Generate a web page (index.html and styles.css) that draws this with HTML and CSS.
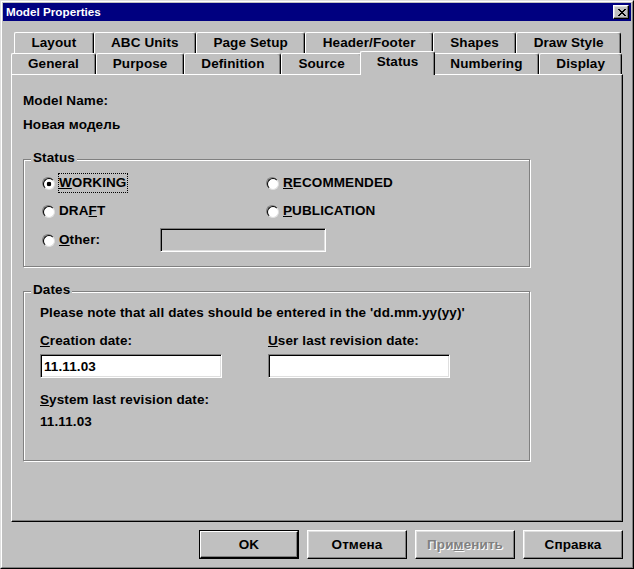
FILE: index.html
```html
<!DOCTYPE html>
<html lang="en">
<head>
<meta charset="utf-8">
<title>Model Properties</title>
<link rel="stylesheet" href="styles.css">
</head>
<body>
<div class="window">
  <div class="frame">
    <div class="titlebar">
      <span class="title">Model Properties</span>
      <span class="close-btn">
        <svg width="8" height="7" viewBox="0 0 8 7" shape-rendering="crispEdges"><path fill="#000" d="M0 0h2v1h-2z M6 0h2v1h-2z M1 1h2v1h-2z M5 1h2v1h-2z M2 2h4v1h-4z M3 3h2v1h-2z M2 4h4v1h-4z M1 5h2v1h-2z M5 5h2v1h-2z M0 6h2v1h-2z M6 6h2v1h-2z"/></svg>
      </span>
    </div>
    <div class="dialog">
      <div class="tabs tabs-back">
        <div class="tab">Layout</div>
        <div class="tab">ABC Units</div>
        <div class="tab">Page Setup</div>
        <div class="tab">Header/Footer</div>
        <div class="tab">Shapes</div>
        <div class="tab">Draw Style</div>
      </div>
      <div class="tabs tabs-front">
        <div class="tab">General</div>
        <div class="tab">Purpose</div>
        <div class="tab">Definition</div>
        <div class="tab">Source</div>
        <div class="tab tab-active">Status</div>
        <div class="tab">Numbering</div>
        <div class="tab">Display</div>
      </div>
      <div class="panel">
        <div class="line">Model Name:</div>
        <div class="line line-gap">Новая модель</div>

        <div class="group group-status">
          <div class="group-title">Status</div>
          <div class="radio-grid">
            <div class="radio-item"><span class="radio checked"></span><span class="radio-text focus"><u>W</u>ORKING</span></div>
            <div class="radio-item"><span class="radio"></span><span class="radio-text"><u>R</u>ECOMMENDED</span></div>
            <div class="radio-item"><span class="radio"></span><span class="radio-text">DRA<u>F</u>T</span></div>
            <div class="radio-item"><span class="radio"></span><span class="radio-text"><u>P</u>UBLICATION</span></div>
          </div>
          <div class="other-row">
            <div class="radio-item other-item"><span class="radio"></span><span class="radio-text"><u>O</u>ther:</span></div>
            <input class="textbox textbox-disabled other-box" type="text" value="" disabled>
          </div>
        </div>

        <div class="group group-dates">
          <div class="group-title">Dates</div>
          <div class="dates-body">
            <div class="line note">Please note that all dates should be entered in the 'dd.mm.yy(yy)'</div>
            <div class="date-grid">
              <div class="date-field">
                <div class="line"><u>C</u>reation date:</div>
                <input class="textbox date-box" type="text" value="11.11.03">
              </div>
              <div class="date-field">
                <div class="line"><u>U</u>ser last revision date:</div>
                <input class="textbox date-box" type="text" value="">
              </div>
            </div>
            <div class="line system-label"><u>S</u>ystem last revision date:</div>
            <div class="line system-value">11.11.03</div>
          </div>
        </div>
      </div>
      <div class="buttons">
        <div class="btn btn-default"><span class="btn-inner">OK</span></div>
        <div class="btn"><span class="btn-inner">Отмена</span></div>
        <div class="btn btn-disabled"><span class="btn-inner">При<u>м</u>енить</span></div>
        <div class="btn"><span class="btn-inner">Справка</span></div>
      </div>
    </div>
  </div>
</div>
</body>
</html>
```
FILE: styles.css
```css
* { box-sizing: border-box; }

html, body {
  margin: 0;
  padding: 0;
  background: #c0c0c0;
}

body {
  font-family: "Liberation Sans", Arial, sans-serif;
  font-weight: bold;
  font-size: 13.5px;
  letter-spacing: 0.1px;
  color: #000;
}

.window {
  width: 634px;
  height: 569px;
  border: 1px solid;
  border-color: #dfdfdf #000 #000 #dfdfdf;
  background: #c0c0c0;
}

.frame {
  height: 100%;
  border: 1px solid;
  border-color: #fff #808080 #808080 #fff;
  padding: 1px;
  display: flex;
  flex-direction: column;
}

.titlebar {
  height: 18px;
  background: #000080;
  display: flex;
  align-items: center;
  justify-content: space-between;
  padding: 0 2px 0 3px;
}

.title {
  color: #fff;
  font-size: 11.7px;
  letter-spacing: 0;
  line-height: 18px;
}

.close-btn {
  width: 16px;
  height: 14px;
  background: #c0c0c0;
  border: 1px solid;
  border-color: #fff #000 #000 #fff;
  box-shadow: inset -1px -1px 0 #808080, inset 1px 1px 0 #dfdfdf;
  display: flex;
  align-items: center;
  justify-content: center;
  padding-left: 1px;
}

.close-btn svg { display: block; }

.dialog {
  flex: 1;
  padding: 11px 8px 0 8px;
  display: flex;
  flex-direction: column;
}

.tabs {
  display: flex;
  height: 21px;
}

.tabs-back { margin: 0 2px 0 3px; }
.tabs-front { margin: 0 1px 0 0; }

.tab {
  flex: 1 1 auto;
  height: 21px;
  border-top: 1px solid #fff;
  border-left: 1px solid #fff;
  border-right: 1px solid #000;
  border-radius: 2px 3px 0 0;
  box-shadow: inset -1px 0 0 #808080;
  line-height: 19px;
  text-align: center;
  white-space: nowrap;
  background: #c0c0c0;
}

.tab-active {
  position: relative;
  z-index: 1;
  height: 24px;
  margin: -2px -2px -1px -2px;
  line-height: 19px;
}

.panel {
  height: 448px;
  border: 1px solid;
  border-color: #fff #000 #000 #fff;
  box-shadow: inset -1px -1px 0 #808080;
  padding: 18px 0 0 11px;
}

.line {
  height: 16px;
  line-height: 16px;
  white-space: nowrap;
}

.line-gap { margin-top: 8px; }

.group {
  width: 507px;
  border: 1px solid #808080;
  box-shadow: 1px 1px 0 #fff, inset 1px 1px 0 #fff;
}

.group-title {
  display: block;
  width: max-content;
  height: 16px;
  line-height: 16px;
  margin: -10px 0 0 7px;
  padding: 0 2px;
  background: #c0c0c0;
}

.group-status {
  margin-top: 26px;
  height: 108px;
}

.radio-grid {
  display: grid;
  grid-template-columns: 224px auto;
  row-gap: 8px;
  margin-top: 7px;
  padding-left: 18px;
}

.radio-item {
  display: flex;
  align-items: center;
  gap: 4px;
  height: 20px;
}

.radio {
  width: 12px;
  height: 12px;
  flex: none;
  border: 1px solid;
  border-color: #808080 #fff #fff #808080;
  border-radius: 50%;
}

.radio::before {
  content: "";
  display: block;
  width: 10px;
  height: 10px;
  border: 1px solid;
  border-color: #000 #dfdfdf #dfdfdf #000;
  border-radius: 50%;
  background: #fff;
}

.radio.checked::before {
  background: radial-gradient(circle, #000 0 2px, #fff 2.6px);
}

.radio-text {
  border: 1px dotted transparent;
  padding: 0 1px 0 0;
  line-height: 18px;
  height: 20px;
}

.radio-text.focus { border-color: #000; }

.other-row {
  display: flex;
  align-items: center;
  margin-top: 7px;
  height: 24px;
  padding-left: 18px;
}

.other-item { width: 118px; }

.textbox {
  display: block;
  height: 24px;
  margin: 0;
  border: 1px solid;
  border-color: #808080 #fff #fff #808080;
  box-shadow: inset 1px 1px 0 #000, inset -1px -1px 0 #dfdfdf;
  background: #fff;
  font: inherit;
  letter-spacing: inherit;
  color: #000;
  padding: 1px 2px 0 3px;
  outline: none;
  -webkit-appearance: none;
  appearance: none;
}

.textbox-disabled { background: #c0c0c0; }

.other-box { width: 166px; }

.group-dates {
  margin-top: 24px;
  height: 170px;
}

.dates-body { padding-left: 16px; }

.note { margin-top: 7px; }

.date-grid {
  display: grid;
  grid-template-columns: 228px 182px;
  margin-top: 12px;
}

.date-box {
  width: 182px;
  margin-top: 5px;
}

.system-label { margin-top: 14px; }
.system-value { margin-top: 6px; }

.buttons {
  display: flex;
  justify-content: flex-end;
  gap: 8px;
  margin-top: 8px;
}

.btn {
  width: 100px;
  height: 29px;
  border: 1px solid;
  border-color: #fff #000 #000 #fff;
  box-shadow: inset -1px -1px 0 #808080, inset 1px 1px 0 #dfdfdf;
  display: flex;
  align-items: center;
  justify-content: center;
}

.btn-default {
  border: 1px solid #000;
  padding: 0;
  box-shadow: none;
}

.btn-default .btn-inner {
  width: 98px;
  height: 27px;
  border: 1px solid;
  border-color: #fff #000 #000 #fff;
  box-shadow: inset -1px -1px 0 #808080;
  display: flex;
  align-items: center;
  justify-content: center;
}

.btn-disabled .btn-inner {
  color: #808080;
  text-shadow: 1px 1px 0 #fff;
}
```
